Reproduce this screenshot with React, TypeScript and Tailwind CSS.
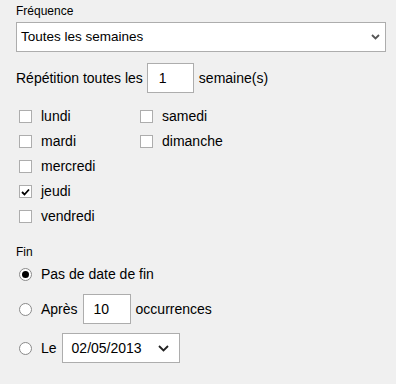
import React from "react";

const font = { fontFamily: '"Segoe UI", "Liberation Sans", Arial, sans-serif' };

function Check({ checked, label }: { checked?: boolean; label: string }) {
  return (
    <div className="flex h-[25px] items-center">
      <div className="ml-[3px] flex h-[13px] w-[13px] items-center justify-center border border-[#adadad] bg-white">
        {checked && (
          <svg width="9" height="8" viewBox="0 0 9 8">
            <path d="M1 4 L3.5 6.5 L8 1.5" stroke="#000" strokeWidth="1.8" fill="none" />
          </svg>
        )}
      </div>
      <span className="ml-[9px] text-[14px] text-black">{label}</span>
    </div>
  );
}

function Radio({ checked }: { checked?: boolean }) {
  return (
    <div className="ml-[3px] flex h-[13px] w-[13px] shrink-0 items-center justify-center rounded-full border border-[#8a8a8a] bg-white">
      {checked && <div className="h-[7px] w-[7px] rounded-full bg-black" />}
    </div>
  );
}

export default function App() {
  return (
    <div className="h-[384px] w-[396px] bg-[#f0f0f0] pl-4 text-black" style={font}>
      <div className="pt-[3px] text-[12px] leading-[16px]">Fréquence</div>
      <div className="mt-[3px] flex h-[30px] w-[370px] items-center justify-between border border-[#adadad] bg-white pl-[4px] pr-[5px]">
        <span className="text-[13.5px]">Toutes les semaines</span>
        <svg width="9" height="6" viewBox="0 0 9 6">
          <path d="M1 1 L4.5 4.5 L8 1" stroke="#555" strokeWidth="1.8" fill="none" />
        </svg>
      </div>
      <div className="mt-[11px] flex items-center">
        <span className="text-[14px]">Répétition toutes les</span>
        <div className="ml-[4px] flex h-[30px] w-[47px] items-center border border-[#adadad] bg-white pl-[11px] text-[14px]">1</div>
        <span className="ml-[5px] text-[14px]">semaine(s)</span>
      </div>
      <div className="mt-[11px] grid w-[250px] grid-cols-[121px_1fr]">
        <div className="flex flex-col">
          <Check label="lundi" />
          <Check label="mardi" />
          <Check label="mercredi" />
          <Check checked label="jeudi" />
          <Check label="vendredi" />
        </div>
        <div className="flex flex-col">
          <Check label="samedi" />
          <Check label="dimanche" />
        </div>
      </div>
      <div className="mt-[15px] text-[12px] leading-[16px]">Fin</div>
      <div className="mt-[2px] flex h-[25px] items-center">
        <Radio checked />
        <span className="ml-[9px] text-[14px]">Pas de date de fin</span>
      </div>
      <div className="mt-[7px] flex h-[30px] items-center">
        <Radio />
        <span className="ml-[9px] text-[14px]">Après</span>
        <div className="ml-[5px] flex h-[30px] w-[48px] items-center border border-[#adadad] bg-white pl-[10px] text-[14px]">10</div>
        <span className="ml-[5px] text-[14px]">occurrences</span>
      </div>
      <div className="mt-[9px] flex h-[30px] items-center">
        <Radio />
        <span className="ml-[9px] text-[14px]">Le</span>
        <div className="ml-[5px] flex h-[30px] w-[118px] items-center justify-between border border-[#adadad] bg-white pl-[9px] pr-[10px] text-[14px]">
          <span>02/05/2013</span>
          <svg width="11" height="7" viewBox="0 0 11 7">
            <path d="M1 1 L5.5 5.5 L10 1" stroke="#222" strokeWidth="1.8" fill="none" />
          </svg>
        </div>
      </div>
    </div>
  );
}
